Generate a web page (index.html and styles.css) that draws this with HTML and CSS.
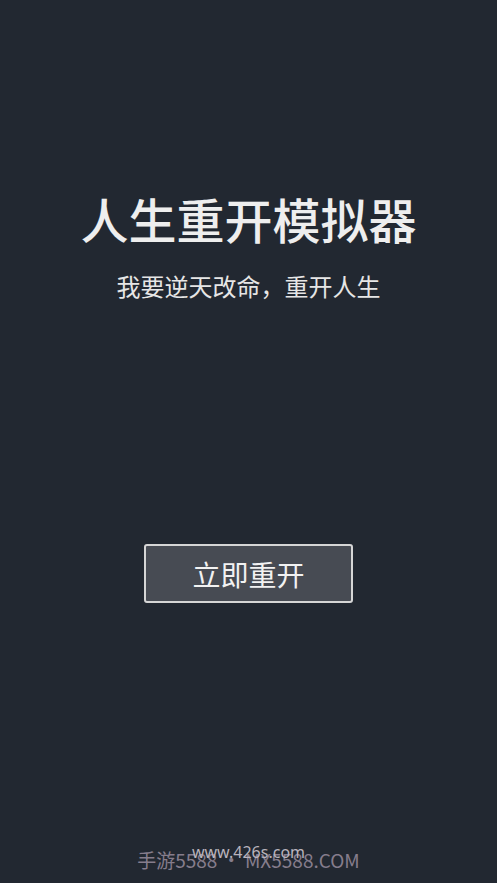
FILE: index.html
```html
<!DOCTYPE html>
<html lang="zh">
<head>
<meta charset="utf-8">
<link rel="stylesheet" href="styles.css">
</head>
<body>
<div class="page">
  <header class="hero">
    <h1 class="title">人生重开模拟器</h1>
    <p class="subtitle">我要逆天改命，重开人生</p>
  </header>
  <div class="action">
    <button class="restart">立即重开</button>
  </div>
  <footer class="watermark">
    <span class="wm-main">手游5588 • MX5588.COM</span>
    <span class="wm-over">www.426s.com</span>
  </footer>
</div>
</body>
</html>
```
FILE: styles.css
```css
html, body {
  margin: 0;
  padding: 0;
  background: #222831;
}
.page {
  width: 497px;
  height: 883px;
  display: flex;
  flex-direction: column;
  align-items: center;
  font-family: "Noto Sans CJK SC", "Noto Sans", sans-serif;
  color: #eeeeee;
  overflow: hidden;
}
.hero {
  margin-top: 184px;
  display: flex;
  flex-direction: column;
  align-items: center;
}
.title {
  margin: 0;
  font-size: 48px;
  line-height: 68px;
  font-weight: 500;
  letter-spacing: 0;
}
.subtitle {
  margin: 0;
  margin-top: 17px;
  font-size: 24px;
  line-height: 34px;
  font-weight: 400;
  color: #e6e6e6;
}
.action {
  margin-top: 241px;
}
.restart {
  width: 209px;
  height: 59px;
  background: #474b53;
  border: 2px solid #d6d6d6;
  border-radius: 3px;
  color: #f2f2f2;
  font-family: "Noto Sans CJK SC", "Noto Sans", sans-serif;
  font-size: 28px;
  padding: 0;
  display: flex;
  align-items: center;
  justify-content: center;
}
.watermark {
  margin-top: auto;
  margin-bottom: 11px;
  position: relative;
  display: flex;
  justify-content: center;
}
.wm-main {
  font-family: "Noto Sans CJK SC", "Noto Sans", sans-serif;
  font-size: 19px;
  line-height: 24px;
  color: #867d8c;
}
.wm-over {
  position: absolute;
  left: 50%;
  top: -5px;
  transform: translateX(-50%);
  font-family: "Noto Sans", sans-serif;
  font-size: 16px;
  line-height: 18px;
  color: #b9b4bd;
  white-space: nowrap;
}
```
